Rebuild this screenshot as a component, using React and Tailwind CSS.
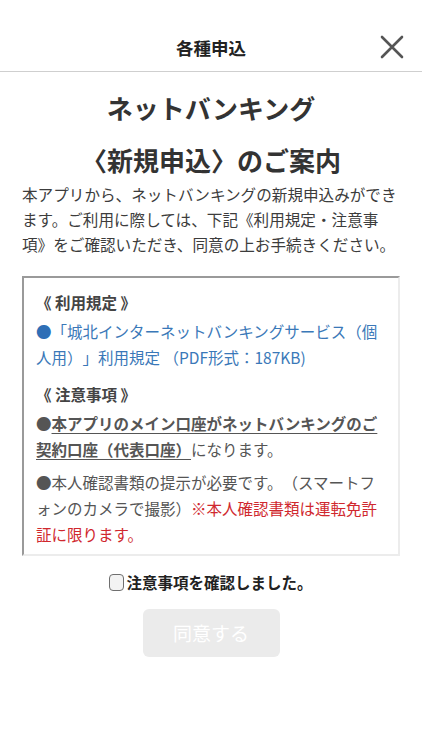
import React from 'react';

const App = () => {
  return (
    <div className="w-[422px] h-[750px] bg-white text-[#333] overflow-hidden [text-spacing-trim:space-all]" style={{ fontFamily: '"Noto Sans CJK JP", "Noto Sans", sans-serif' }}>
      {/* Header */}
      <div className="relative h-[72px] border-b border-[#cfcfcf] flex items-end justify-center pb-[15px]">
        <h1 className="text-[17.5px] font-bold text-[#222] leading-none">各種申込</h1>
        <button className="absolute right-[18px] top-[35px] text-[#555]">
          <svg width="24" height="24" viewBox="0 0 24 24" fill="none" stroke="currentColor" strokeWidth="2.6" strokeLinecap="round">
            <path d="M2 2 L22 22 M22 2 L2 22" />
          </svg>
        </button>
      </div>

      {/* Title */}
      <div className="text-center pt-[17px]">
        <h2 className="text-[26px] font-bold text-[#333] leading-[38px]">ネットバンキング</h2>
        <h2 className="text-[26px] font-bold text-[#333] leading-[38px] mt-[14px]">〈新規申込〉のご案内</h2>
      </div>

      <p className="px-[22px] mt-[3px] text-[15.6px] leading-[25px] text-[#3c3c3c]">
        本アプリから、ネットバンキングの新規申込みができます。ご利用に際しては、下記《利用規定・注意事項》をご確認いただき、同意の上お手続きください。
      </p>

      {/* Terms box */}
      <div className="mx-[22px] mt-[19px] h-[280px] overflow-hidden border-2 border-t-[#9a9a9a] border-l-[#9a9a9a] border-r-[#ececec] border-b-[#ececec] pl-[12px] pr-[15px] pt-[11px] text-[15.5px] leading-[26px] text-[#555]">
        <p className="font-bold text-[#444]">《 利用規定 》</p>
        <p className="mt-[3px] text-[#3a78b8]">
          <span className="text-[#2f6fb6]">●</span>「城北インターネットバンキングサービス（個人用）」利用規定 （PDF形式：187KB)
        </p>
        <p className="mt-[11px] font-bold text-[#444]">《 注意事項 》</p>
        <p className="mt-[3px]">
          ●<span className="font-bold underline underline-offset-[3px]">本アプリのメイン口座がネットバンキングのご契約口座（代表口座）</span>になります。
        </p>
        <p className="mt-[7px]">
          ●本人確認書類の提示が必要です。（スマートフォンのカメラで撮影）<span className="text-[#d0282e]">※本人確認書類は運転免許証に限ります。</span>
        </p>
        <p className="mt-[8px]">●お申込みには、キャッシュカードの暗証番号が必要です。</p>
      </div>

      {/* Checkbox */}
      <div className="flex items-center justify-center mt-[15px] h-[22px]">
        <span className="shrink-0 block w-[15px] h-[17px] rounded-[4px] border border-[#6f6f6f] bg-[#f3f3f3] mr-[2px]"></span>
        <span className="text-[15.5px] font-bold text-[#222] leading-[22px]">注意事項を確認しました。</span>
      </div>

      <div className="flex justify-center mt-[16px]">
        <button disabled className="w-[137px] h-[48px] rounded-[6px] bg-[#ebebeb] text-white text-[19px]">同意する</button>
      </div>
    </div>
  );
};

export default App;
